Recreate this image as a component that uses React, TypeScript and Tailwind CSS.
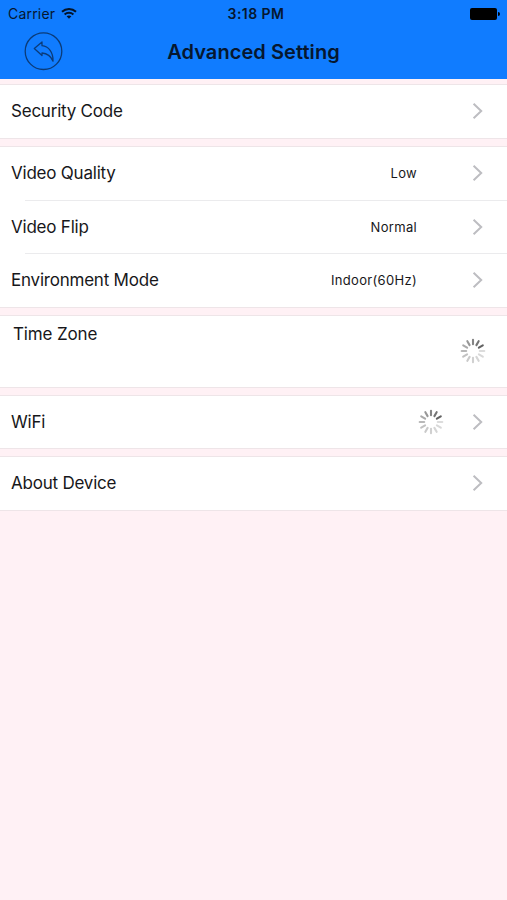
import type { ReactNode } from "react";

function Chevron() {
  return (
    <svg className="block h-[18px] w-3 shrink-0" viewBox="0 0 12 18" fill="none" stroke="#bdbdc1" strokeWidth="2">
      <path d="M1.6 1.8 9.2 9l-7.6 7.2" />
    </svg>
  );
}

const SPOKES = [
  "#858585", "#757575", "#626262", "#dcdcdc", "#d8d8d8", "#d5d5d5",
  "#d0d0d0", "#cacaca", "#c2c2c2", "#b8b8b8", "#aaaaaa", "#979797",
];

function Spinner() {
  return (
    <svg className="block size-[26px] shrink-0" viewBox="-13 -13 26 26" strokeLinecap="round" strokeWidth="2.1">
      {SPOKES.map((color, i) => (
        <line key={i} x1="0" y1="-6.8" x2="0" y2="-11.3" stroke={color} transform={`rotate(${i * 30})`} />
      ))}
    </svg>
  );
}

function Section({ className, children }: { className: string; children: ReactNode }) {
  return <section className={`flex flex-col border-y border-[#eee5e8] bg-white ${className}`}>{children}</section>;
}

function Row({ label, children }: { label: string; children?: ReactNode }) {
  return (
    <div className="flex min-h-0 flex-1 items-center pr-[23px] pb-px pl-[11px]">
      <span className="text-[17px] leading-6 tracking-[-0.22px] whitespace-nowrap">{label}</span>
      <span className="ml-auto flex items-center">{children}</span>
      <Chevron />
    </div>
  );
}

function Value({ children }: { children: ReactNode }) {
  return <span className="mr-[55px] text-[13px] leading-5 tracking-[0.32px]">{children}</span>;
}

function Divider() {
  return <div className="ml-[25px] h-px shrink-0 bg-[#ebebed]" />;
}

export default function App() {
  return (
    <div className="flex h-[900px] w-[507px] flex-col overflow-hidden bg-[#fff1f5] font-['Inter',sans-serif] text-[#17171a]">
      <header className="h-[79px] shrink-0 bg-[#107cff] text-[#06172f]">
        <div className="grid h-[27px] grid-cols-[1fr_auto_1fr] items-center px-2">
          <div className="flex items-center gap-[6px]">
            <span className="text-[14px] leading-5 tracking-[0.2px]">Carrier</span>
            <svg className="h-[13px] w-4" viewBox="0 0 16 13" fill="none" stroke="#03142a" strokeWidth="2">
              <path d="M1 4.7C4.9 1 11.1 1 15 4.7M3.6 7.4c2.5-2.3 6.3-2.3 8.8 0" />
              <path d="M5.6 9.3c1.4-1.2 3.4-1.2 4.8 0L8 11.7Z" fill="#03142a" stroke="none" />
            </svg>
          </div>
          <span className="pl-[5px] text-center text-[14px] leading-5 font-semibold tracking-[0.45px]">3:18 PM</span>
          <div className="-mr-px flex items-center justify-end">
            <div className="h-3 w-[27px] rounded-[2px] bg-black" />
            <div className="ml-px h-1 w-[2px] rounded-r-full bg-black" />
          </div>
        </div>
        <div className="grid h-[49px] grid-cols-[1fr_auto_1fr] items-center px-6">
          <svg className="size-[39px]" viewBox="0 0 39 39" fill="none" stroke="#0b3b78" strokeWidth="1.3" strokeLinejoin="round">
            <circle cx="19.5" cy="19.2" r="18.3" />
            <path d="M10.3 16.5 18 10v3.7c6.6.6 11.4 6.6 11 15.5-2.2-5.4-5.8-7.9-11-8.2v2.6Z" />
          </svg>
          <h1 className="pt-px text-[20px] leading-7 font-semibold tracking-[0.07px]">Advanced Setting</h1>
        </div>
      </header>
      <main className="mt-[5px] flex flex-col gap-[7px]">
        <Section className="h-[55px]">
          <Row label="Security Code" />
        </Section>
        <Section className="h-[162px]">
          <Row label="Video Quality"><Value>Low</Value></Row>
          <Divider />
          <Row label="Video Flip"><Value>Normal</Value></Row>
          <Divider />
          <Row label="Environment Mode"><Value>Indoor(60Hz)</Value></Row>
        </Section>
        <Section className="h-[73px]">
          <div className="flex h-full items-center justify-between pr-[21px] pb-px pl-[13px]">
            <span className="self-start pt-[6px] text-[17px] leading-6 tracking-[-0.15px]">Time Zone</span>
            <Spinner />
          </div>
        </Section>
        <Section className="h-[54px]">
          <Row label="WiFi">
            <span className="mr-[28px]"><Spinner /></span>
          </Row>
        </Section>
        <Section className="h-[55px]">
          <Row label="About Device" />
        </Section>
      </main>
    </div>
  );
}
